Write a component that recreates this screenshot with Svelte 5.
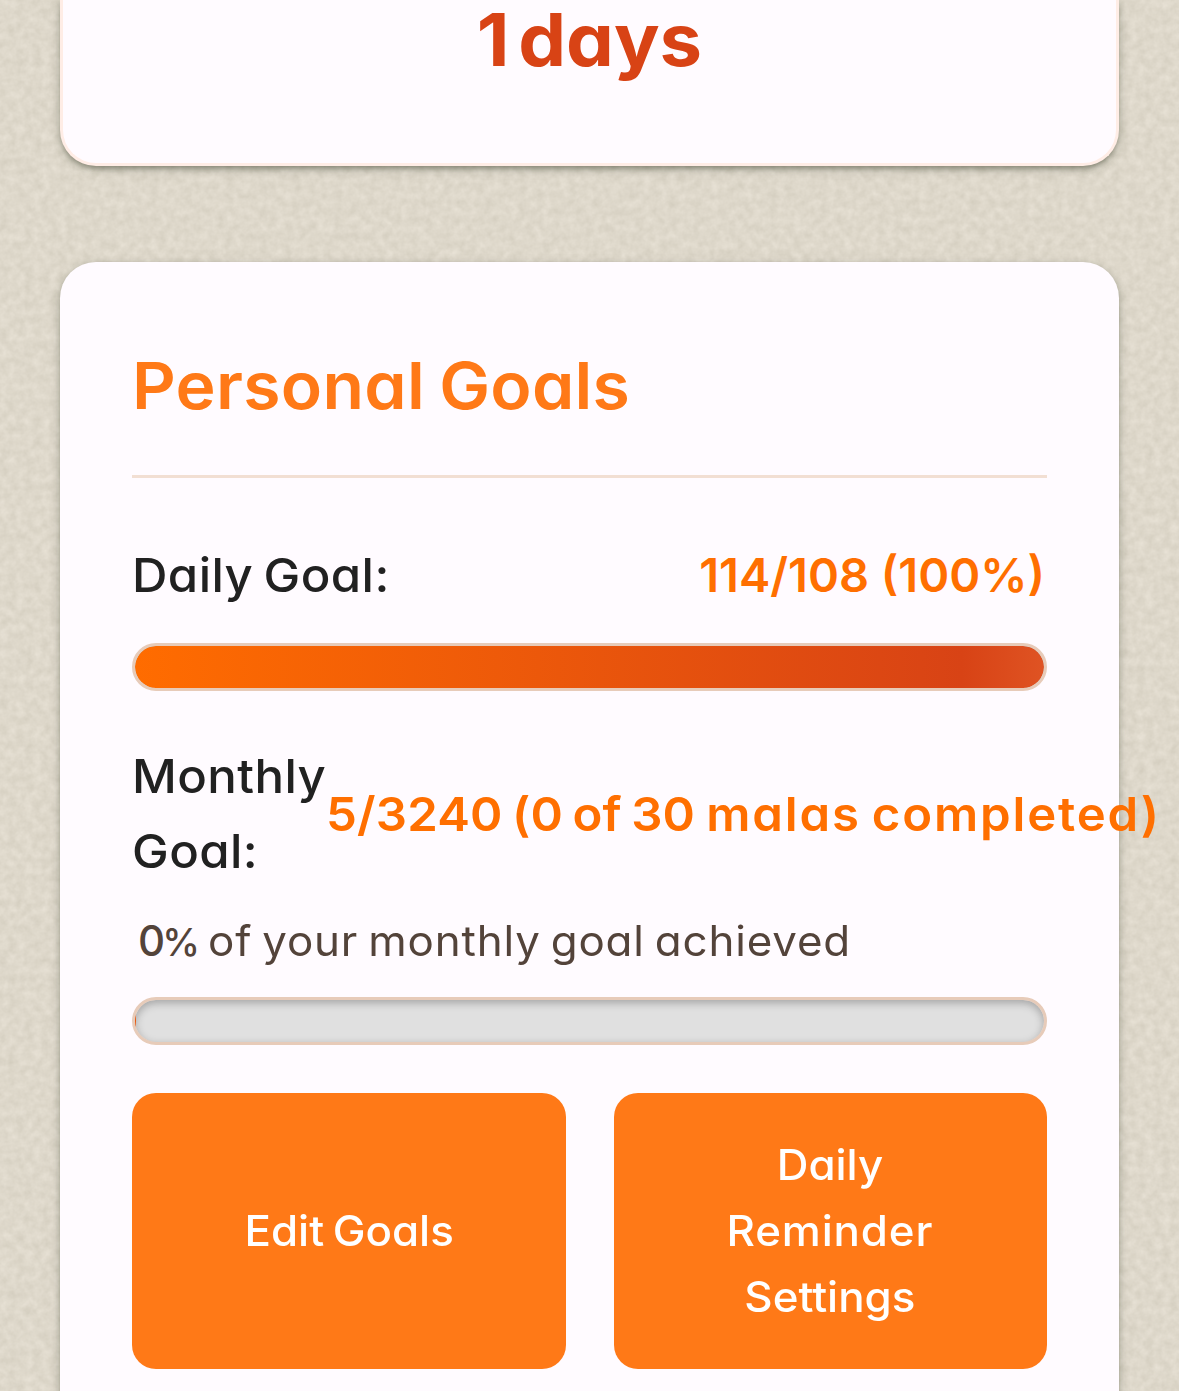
<script>
  const daily = { done: 114, target: 108, percent: 100 };
  const monthly = { done: 5, target: 3240, malas: 0, totalMalas: 30, percent: 0 };
</script>

<div class="page">
  <svg class="texture" aria-hidden="true">
    <filter id="paper" x="0" y="0" width="100%" height="100%" color-interpolation-filters="sRGB">
      <feTurbulence type="fractalNoise" baseFrequency="0.12" numOctaves="3" seed="8" stitchTiles="stitch" />
      <feColorMatrix
        values="0.09 0 0 0 0.825
                0.09 0 0 0 0.801
                0.10 0 0 0 0.744
                0 0 0 0 1"
      />
    </filter>
    <rect width="100%" height="100%" filter="url(#paper)" />
  </svg>

  <section class="card streak">
    <div class="streak-value">1 days</div>
  </section>

  <section class="card goals">
    <header><h2>Personal Goals</h2></header>

    <div class="goal-row">
      <span class="label">Daily Goal:</span>
      <span class="value daily-value">{daily.done}/{daily.target} ({daily.percent}%)</span>
    </div>
    <div class="bar">
      <div class="fill" style="width: {daily.percent}%"></div>
    </div>

    <div class="goal-row monthly">
      <span class="label month-label">Monthly Goal:</span>
      <span class="value"><span class="figures">{monthly.done}/{monthly.target} ({monthly.malas} of {monthly.totalMalas}</span> malas completed)</span>
    </div>
    <p class="note"><strong>{monthly.percent}<i>%</i></strong><span>of your monthly goal achieved</span></p>
    <div class="bar empty">
      <div class="fill sliver"></div>
    </div>

    <div class="actions">
      <button><span class="edit">Edit Goals</span></button>
      <button>
        <span>Daily</span>
        <span class="wide">Reminder</span>
        <span>Settings</span>
      </button>
    </div>
  </section>
</div>

<style>
  :global(body) {
    background: #dfd9cb;
  }

  .page {
    position: relative;
    box-sizing: border-box;
    height: 1391px;
    overflow: hidden;
    padding: 0 60px;
    font-family: Inter, "Noto Sans", sans-serif;
    font-feature-settings: "cv11";
    color: #212121;
  }

  .texture {
    position: absolute;
    inset: 0;
    width: 100%;
    height: 100%;
  }

  .card {
    position: relative;
    box-sizing: border-box;
    background: #fffbff;
    box-shadow:
      0 5px 4px -3px rgba(50, 55, 35, 0.22),
      0 3px 6px rgba(50, 55, 35, 0.26),
      0 3px 12px rgba(50, 60, 35, 0.16);
  }

  .streak {
    height: 166px;
    border: 3px solid #ffede6;
    border-top: 0;
    border-radius: 0 0 36px 36px;
  }

  .streak-value {
    font-size: 73px;
    font-weight: 700;
    line-height: 79px;
    word-spacing: -9px;
    text-align: center;
    color: #d84315;
    transform: scaleX(1.04);
  }

  .goals {
    height: 1250px;
    margin-top: 96px;
    padding: 72px;
    border-radius: 36px;
  }

  header {
    margin-bottom: 60px;
    padding-bottom: 37px;
    border-bottom: 3px solid #f2dfd3;
  }

  h2 {
    margin: 0;
    font-size: 65px;
    font-weight: 600;
    line-height: 104px;
    letter-spacing: 0.25px;
    word-spacing: -3px;
    color: #ff7917;
    transform: scaleX(1.045);
    transform-origin: left;
  }

  .goal-row {
    display: flex;
    align-items: center;
    justify-content: space-between;
    margin-bottom: 32px;
    padding-top: 0;
    font-size: 47px;
    line-height: 75px;
    white-space: nowrap;
    word-spacing: -3px;
    margin-top: -2px;
    height: 75px;
  }

  .label {
    font-weight: 500;
    letter-spacing: 0.4px;
    margin-top: 2px;
    transform: scaleX(1.045);
    transform-origin: left;
  }

  .month-label {
    flex: 0 0 194px;
    white-space: normal;
  }

  .value {
    font-weight: 600;
    letter-spacing: 1.75px;
    margin-top: 2px;
    color: #ff6f00;
    transform: scaleX(1.045);
    transform-origin: left;
  }

  .figures {
    letter-spacing: 0.15px;
  }

  .daily-value {
    letter-spacing: 0;
    word-spacing: 0;
    margin-right: 2px;
    transform: none;
  }

  .monthly {
    justify-content: flex-start;
    height: 150px;
    margin: 46px 0 23px;
  }

  .bar {
    box-sizing: border-box;
    height: 48px;
    overflow: hidden;
    border: 3px solid #e7cbb9;
    border-radius: 24px;
    background: #e0e0e0;
    box-shadow: inset 0 3px 9px rgba(0, 0, 0, 0.27);
  }

  .fill {
    height: 100%;
    border-radius: 21px;
    background: linear-gradient(90deg, #ff6c00, #d84315 91%, #df5323);
  }

  .sliver {
    width: 1px;
    border-radius: 0;
  }

  .note {
    display: flex;
    align-items: baseline;
    height: 63px;
    margin: 0 0 24px 6px;
    font-size: 42px;
    line-height: 62px;
    letter-spacing: 0.8px;
    word-spacing: -3px;
    white-space: nowrap;
    color: #53433a;
  }

  .note span {
    transform: scaleX(1.045);
    transform-origin: left;
  }

  .note strong {
    width: 70px;
    font-weight: 500;
    letter-spacing: -3px;
  }

  .note i {
    font-size: 38px;
    font-style: normal;
    line-height: 1;
  }

  .actions {
    display: grid;
    grid-template-columns: 1fr 1fr;
    gap: 48px;
    margin-top: 48px;
  }

  button {
    display: flex;
    flex-direction: column;
    align-items: center;
    justify-content: center;
    height: 276px;
    padding: 0;
    border: 0;
    border-radius: 24px;
    background: #ff7917;
    color: #fff;
    font: inherit;
    font-size: 42px;
    font-weight: 500;
    font-feature-settings: "cv11";
    line-height: 66px;
  }

  button span {
    transform: scaleX(1.045);
  }

  .edit {
    word-spacing: -3px;
  }

  .wide {
    letter-spacing: 0.8px;
  }
</style>
